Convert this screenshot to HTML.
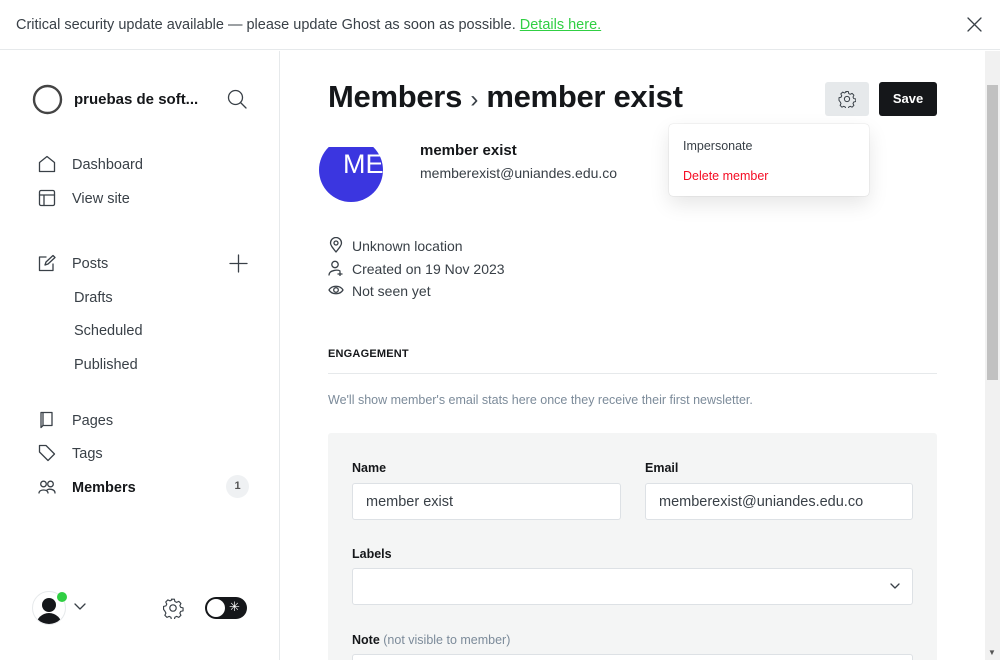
<!DOCTYPE html>
<html style="overflow:hidden;height:660px"><head><meta charset="utf-8"><style>
*{box-sizing:border-box;margin:0;padding:0}
body{width:1000px;height:660px;overflow:hidden;background:#fff;font-family:"Liberation Sans",sans-serif;color:#15171a;position:relative}
#w{position:absolute;left:0;top:0;width:1000px;height:660px;overflow:hidden}
.a{position:absolute;white-space:nowrap}
.nav{font-size:14.5px;color:#394047}
svg{position:absolute;fill:none;stroke:#394047;stroke-width:1.3;stroke-linecap:round;stroke-linejoin:round}
.lbl{font-size:12.5px;font-weight:bold;color:#15171a}
.inp{position:absolute;background:#fff;border:1px solid #dde1e5;border-radius:3px;height:37px;font-size:14.5px;color:#394047;padding:10px 13px}
.meta{font-size:14px;color:#394047}
</style></head><body><div id="w">
<div class="a" style="left:0;top:0;width:1000px;height:50px;border-bottom:1px solid #e6e9eb"></div>
<div class="a" style="left:16px;top:17px;font-size:14.5px;color:#394047">Critical security update available — please update Ghost as soon as possible. <span style="color:#30cf43;text-decoration:underline">Details here.</span></div>
<svg style="left:967px;top:17px" width="15" height="15" viewBox="0 0 15 15"><path d="M1 1L14 14M14 1L1 14"/></svg>
<div class="a" style="left:279px;top:51px;width:1px;height:609px;background:#e6e9eb"></div>
<svg style="left:32px;top:84px" width="31" height="31" viewBox="0 0 31 31"><circle cx="15.5" cy="15.5" r="13.5" stroke="#444" stroke-width="2.4"/></svg>
<div class="a" style="left:74px;top:91px;font-size:15px;font-weight:bold">pruebas de soft...</div>
<svg style="left:227px;top:89px" width="20" height="20" viewBox="0 0 20 20" stroke="#15171a" stroke-width="1.6"><circle cx="8.5" cy="8.5" r="7"/><path d="M13.5 13.5L19 19"/></svg>
<svg style="left:38px;top:155px" width="18" height="18" viewBox="0 0 18 18"><path d="M1.5 7.5L9 1.5L16.5 7.5V16.5H1.5Z"/></svg>
<div class="a nav" style="left:72px;top:157px">Dashboard</div>
<svg style="left:38px;top:189px" width="18" height="18" viewBox="0 0 18 18"><rect x="1.5" y="1.5" width="15" height="15" rx="1.5"/><path d="M1.5 6H16.5M6 6V16.5"/></svg>
<div class="a nav" style="left:72px;top:191px">View site</div>
<svg style="left:38px;top:254px" width="18" height="18" viewBox="0 0 18 18"><path d="M8 3H1.5V16.5H15V10M7 11L8 8L15 1.5L17 3.5L10 10Z"/></svg>
<div class="a nav" style="left:72px;top:256px">Posts</div>
<svg style="left:229px;top:254px" width="19" height="19" viewBox="0 0 19 19"><path d="M9.5 1V18M1 9.5H18"/></svg>
<div class="a nav" style="left:74px;top:290px">Drafts</div>
<div class="a nav" style="left:74px;top:323px">Scheduled</div>
<div class="a nav" style="left:74px;top:357px">Published</div>
<svg style="left:38px;top:411px" width="18" height="18" viewBox="0 0 18 18"><path d="M3 1.5H14V14.5H5L3 16.5Z M5 1.5V14.5"/></svg>
<div class="a nav" style="left:72px;top:413px">Pages</div>
<svg style="left:38px;top:444px" width="18" height="18" viewBox="0 0 18 18"><path d="M1.5 1.5H8L16.5 10L10 16.5L1.5 8Z"/></svg>
<div class="a nav" style="left:72px;top:446px">Tags</div>
<svg style="left:38px;top:479px" width="18" height="16" viewBox="0 0 18 16"><circle cx="5.5" cy="5" r="2.8"/><circle cx="12.5" cy="5" r="2.8"/><path d="M1 14C1 10 10 10 10 14M9 11C11 9.5 17 10 17 14"/></svg>
<div class="a nav" style="left:72px;top:480px;font-weight:bold;color:#15171a">Members</div>
<div class="a" style="left:226px;top:475px;width:23px;height:23px;border-radius:12px;background:#eff1f3;font-size:11px;font-weight:bold;color:#555;text-align:center;line-height:23px">1</div>
<div class="a" style="left:32px;top:591px;width:34px;height:34px;border-radius:50%;border:1px solid #e6e9eb;overflow:hidden">
 <div class="a" style="left:9px;top:6px;width:14px;height:14px;border-radius:50%;background:#15171a"></div>
 <div class="a" style="left:3px;top:21px;width:26px;height:20px;border-radius:13px 13px 0 0;background:#15171a"></div></div>
<div class="a" style="left:57px;top:592px;width:10px;height:10px;border-radius:50%;background:#30cf43"></div>
<svg style="left:74px;top:603px" width="12" height="8" viewBox="0 0 12 8"><path d="M1 1L6 6L11 1"/></svg>
<svg style="left:162px;top:597px" width="22" height="22" viewBox="0 0 24 24" stroke="#15171a"><circle cx="12" cy="12" r="3.5"/><path d="M10.3 2h3.4l.6 2.7 2 1 2.5-1.2 2.4 2.4-1.2 2.5 1 2 2.7.6v3.4l-2.7.6-1 2 1.2 2.5-2.4 2.4-2.5-1.2-2 1-.6 2.7h-3.4l-.6-2.7-2-1-2.5 1.2-2.4-2.4 1.2-2.5-1-2L1.3 13.7v-3.4l2.7-.6 1-2-1.2-2.5 2.4-2.4 2.5 1.2 2-1z" transform="scale(.95) translate(.5 .5)"/></svg>
<div class="a" style="left:205px;top:597px;width:42px;height:22px;border-radius:11px;background:#15171a"></div>
<div class="a" style="left:207px;top:599px;width:18px;height:18px;border-radius:50%;background:#fff"></div>
<div class="a" style="left:229px;top:599px;color:#fff;font-size:13px">✳</div>
<div class="a" style="left:328px;top:79px;font-size:31px;font-weight:bold;letter-spacing:-0.3px">Members <span style="font-weight:normal;font-size:24px;color:#394047">›</span> member exist</div>
<div class="a" style="left:825px;top:82px;width:44px;height:34px;border-radius:3px;background:#e6e9eb"></div>
<svg style="left:838px;top:90px" width="18" height="18" viewBox="0 0 24 24"><circle cx="12" cy="12" r="3.5"/><path d="M10.3 2h3.4l.6 2.7 2 1 2.5-1.2 2.4 2.4-1.2 2.5 1 2 2.7.6v3.4l-2.7.6-1 2 1.2 2.5-2.4 2.4-2.5-1.2-2 1-.6 2.7h-3.4l-.6-2.7-2-1-2.5 1.2-2.4-2.4 1.2-2.5-1-2L1.3 13.7v-3.4l2.7-.6 1-2-1.2-2.5 2.4-2.4 2.5 1.2 2-1z"/></svg>
<div class="a" style="left:879px;top:82px;width:58px;height:34px;border-radius:3px;background:#15171a;color:#fff;font-size:13px;font-weight:bold;text-align:center;line-height:34px">Save</div>
<div class="a" style="left:319px;top:138px;width:64px;height:64px;border-radius:50%;background:#3b36e0"></div>
<div class="a" style="left:300px;top:120px;width:400px;height:27px;background:#fff"></div>
<div class="a" style="left:343px;top:149px;color:#fff;font-size:27px">ME</div>
<div class="a" style="left:420px;top:142px;font-size:15px;font-weight:bold">member exist</div>
<div class="a" style="left:420px;top:165px;font-size:14px;color:#394047">memberexist@uniandes.edu.co</div>
<div class="a" style="left:669px;top:124px;width:200px;height:72px;border-radius:4px;background:#fff;box-shadow:0 0 1px rgba(0,0,0,.25),0 8px 20px rgba(0,0,0,.1)"></div>
<div class="a" style="left:683px;top:139px;font-size:12.5px;color:#394047">Impersonate</div>
<div class="a" style="left:683px;top:169px;font-size:12.5px;color:#f50b23">Delete member</div>
<svg style="left:329px;top:237px" width="14" height="16" viewBox="0 0 14 16" stroke="#7c8b9a"><path d="M7 15C3 10 1.5 8 1.5 6A5.5 5.5 0 0 1 12.5 6C12.5 8 11 10 7 15Z"/><circle cx="7" cy="6" r="2"/></svg>
<div class="a meta" style="left:352px;top:238px">Unknown location</div>
<svg style="left:328px;top:260px" width="16" height="16" viewBox="0 0 16 16" stroke="#7c8b9a"><circle cx="7" cy="4.5" r="3.2"/><path d="M1 15C1 10 10 9.5 12 11M12 12V16M10 14H14"/></svg>
<div class="a meta" style="left:352px;top:261px">Created on 19 Nov 2023</div>
<svg style="left:328px;top:284px" width="16" height="12" viewBox="0 0 16 12" stroke="#7c8b9a"><path d="M1 6C4 1 12 1 15 6C12 11 4 11 1 6Z"/><circle cx="8" cy="6" r="2.3"/></svg>
<div class="a meta" style="left:352px;top:283px">Not seen yet</div>
<div class="a" style="left:328px;top:348px;font-size:11px;font-weight:bold;letter-spacing:.2px">ENGAGEMENT</div>
<div class="a" style="left:328px;top:373px;width:609px;height:1px;background:#e6e9eb"></div>
<div class="a" style="left:328px;top:393px;font-size:12.5px;color:#7c8b9a">We'll show member's email stats here once they receive their first newsletter.</div>
<div class="a" style="left:328px;top:433px;width:609px;height:240px;background:#f4f5f5;border-radius:3px"></div>
<div class="a lbl" style="left:352px;top:461px">Name</div>
<div class="a lbl" style="left:645px;top:461px">Email</div>
<div class="inp" style="left:352px;top:483px;width:269px">member exist</div>
<div class="inp" style="left:645px;top:483px;width:268px">memberexist@uniandes.edu.co</div>
<div class="a lbl" style="left:352px;top:547px">Labels</div>
<div class="inp" style="left:352px;top:568px;width:561px"></div>
<svg style="left:890px;top:583px" width="10" height="7" viewBox="0 0 10 7" stroke="#a0a8b0"><path d="M1 1L5 5L9 1"/></svg>
<div class="a lbl" style="left:352px;top:633px">Note <span style="font-weight:normal;color:#7c8b9a">(not visible to member)</span></div>
<div class="inp" style="left:352px;top:654px;width:561px"></div>
<div class="a" style="left:985px;top:51px;width:15px;height:609px;background:#f1f1f1"></div>
<div class="a" style="left:987px;top:85px;width:11px;height:295px;background:#c1c1c1"></div>
<div class="a" style="left:988px;top:648px;font-size:8px;color:#555">▼</div>
</div></body></html>
